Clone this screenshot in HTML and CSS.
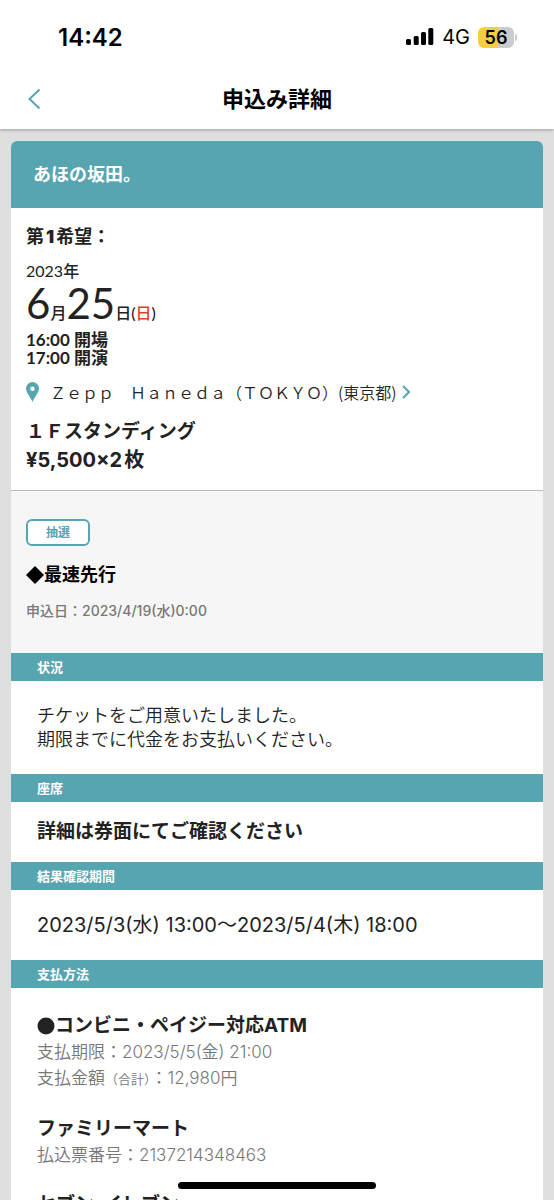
FILE: index.html
```html
<!DOCTYPE html>
<html lang="ja">
<head>
<meta charset="utf-8">
<meta name="viewport" content="width=device-width, initial-scale=1">
<title>申込み詳細</title>
<link rel="stylesheet" href="styles.css">
</head>
<body>
<div class="app">
  <header class="top">
    <div class="status">
      <time class="clock">14:42</time>
      <div class="status-right">
        <svg class="signal" width="28" height="18" viewBox="0 0 28 18" aria-hidden="true">
          <rect x="0" y="11" width="5" height="6" rx="1.5"/>
          <rect x="7.7" y="8" width="5" height="9" rx="1.5"/>
          <rect x="15" y="4" width="5" height="13" rx="1.5"/>
          <rect x="22.3" y="0" width="5" height="17" rx="1.5"/>
        </svg>
        <span class="network">4G</span>
        <span class="battery"><span class="battery-level">56</span><span class="battery-tip"></span></span>
      </div>
    </div>
    <div class="nav">
      <button class="back" type="button" aria-label="戻る">
        <svg width="13" height="22" viewBox="0 0 13 22" aria-hidden="true"><path d="M11.5 1.5 1.5 11l10 9.5"/></svg>
      </button>
      <h1 class="title">申込み詳細</h1>
    </div>
  </header>

  <main class="page">
    <article class="card">
      <h2 class="artist">あほの坂田。</h2>
      <section class="event">
        <h3 class="choice">第<b>1</b>希望：</h3>
        <div class="year">2023<span>年</span></div>
        <div class="date"><span class="big">6</span>月<span class="big">25</span>日(<span class="sunday">日</span>)</div>
        <div class="times">16:00 開場<br>17:00 開演</div>
        <a class="venue" href="#">
          <svg class="pin" width="13" height="20" viewBox="0 0 13 20" aria-hidden="true"><path fill-rule="evenodd" d="M6.5 0A6.5 6.5 0 0 0 0 6.5C0 10.5 4 14 6.5 20 9 14 13 10.5 13 6.5A6.5 6.5 0 0 0 6.5 0Zm0 4.500a2.200 2.200 0 1 1 0 4.400 2.200 2.200 0 0 1 0-4.400Z"/></svg>
          <span>Ｚｅｐｐ　Ｈａｎｅｄａ（ＴＯＫＹＯ）(東京都)</span>
          <svg class="chevron" width="8" height="14" viewBox="0 0 8 14" aria-hidden="true"><path d="m1 1 6 6-6 6"/></svg>
        </a>
        <div class="ticket">１Ｆスタンディング</div>
        <div class="ticket price">¥5,500×2<span>枚</span></div>
      </section>
      <section class="entry">
        <span class="tag">抽選</span>
        <h3 class="entry-name"><svg width="18" height="18" viewBox="0 0 18 18" aria-hidden="true"><path d="m9 0 9 9-9 9-9-9z"/></svg>最速先行</h3>
        <p class="entry-date">申込日：2023/4/19(水)0:00</p>
      </section>
      <section>
        <h3 class="bar">状況</h3>
        <p class="body state">チケットをご用意いたしました。<br>期限までに代金をお支払いください。</p>
      </section>
      <section>
        <h3 class="bar">座席</h3>
        <p class="body seat">詳細は券面にてご確認ください</p>
      </section>
      <section>
        <h3 class="bar">結果確認期間</h3>
        <p class="body period">2023/5/3(水) 13:00～2023/5/4(木) 18:00</p>
      </section>
      <section>
        <h3 class="bar">支払方法</h3>
        <div class="body payment">
          <div>
            <h4 class="method"><svg width="18" height="18" viewBox="0 0 18 18" aria-hidden="true"><circle cx="9" cy="9" r="8.500"/></svg>コンビニ・ペイジー対応ATM</h4>
            <p>支払期限：2023/5/5(金) 21:00</p>
            <p>支払金額<small>（合計）</small>：12,980円</p>
          </div>
          <div>
            <h4 class="method">ファミリーマート</h4>
            <p>払込票番号：2137214348463</p>
          </div>
          <div>
            <h4 class="method">セブン-イレブン</h4>
          </div>
        </div>
      </section>
    </article>
  </main>
  <div class="home-indicator"></div>
</div>
</body>
</html>
```

FILE: styles.css
```css
* { box-sizing: border-box; }

body, h1, h2, h3, h4, p { margin: 0; }

body {
  background: #dfdfdf;
  color: #222;
  font-family: Inter, "Noto Sans CJK JP", sans-serif;
  font-size: 16px;
}

.app {
  position: relative;
  display: flex;
  flex-direction: column;
  height: 100vh;
  overflow: hidden;
}

.top {
  flex: none;
  background: #fff;
  color: #000;
  box-shadow: 0 1px 3px rgba(0, 0, 0, 0.3);
  z-index: 1;
}

.status {
  display: flex;
  justify-content: space-between;
  align-items: center;
  height: 74px;
  padding: 0 40px 0 58px;
}

.clock { font-size: 24px; font-weight: 600; }
.status-right { display: flex; align-items: center; gap: 8px; }
.network { font-size: 20px; }

.battery {
  position: relative;
  width: 36px;
  height: 21px;
  border-radius: 6px;
  background: linear-gradient(90deg, #f6cd42 56%, #cbcbcd 56%);
  text-align: center;
}

.battery-level { display: block; font-size: 18px; font-weight: 600; line-height: 21px; }

.battery-tip {
  position: absolute;
  top: 7px;
  right: -3px;
  width: 2px;
  height: 7px;
  border-radius: 0 2px 2px 0;
  background: #cbcbcd;
}

.nav {
  display: grid;
  grid-template-columns: 40px 1fr 40px;
  align-items: center;
  height: 55px;
  padding: 0 14px 6px;
}

.back { display: flex; justify-content: center; padding: 0; border: 0; background: none; }
.back path, .chevron path { fill: none; stroke: #57a5b1; stroke-width: 2; }
.title { font-size: 22px; font-weight: 700; line-height: 30px; text-align: center; }

.page { flex: 1; min-height: 0; overflow-y: auto; scrollbar-width: none; padding: 12px 11px 0; }
.card { overflow: hidden; border-radius: 6px 6px 0 0; background: #fff; }

.artist {
  padding: 20px 22px;
  background: #57a5b1;
  color: #fff;
  font-size: 18px;
  font-weight: 700;
  line-height: 27px;
}

.event {
  padding: 16px 15px 15px;
  border-bottom: 1px solid #bbb;
}

.choice { font-size: 18px; font-weight: 700; line-height: 26px; }
.choice b { margin: 0 2px; }

.year, .date, .times { font-family: Lato, "Noto Sans CJK JP", sans-serif; }
.year { margin-top: 11px; line-height: 20px; }
.year span { font-weight: 500; }
.date {
  display: flex;
  align-items: baseline;
  margin: 4px 0 10px;
  font-weight: 500;
  line-height: 16px;
}
.big { font-size: 42px; font-weight: 400; line-height: 36px; }
.sunday { color: #e4392d; }
.times { font-size: 17px; font-weight: 700; line-height: 18px; }

.venue {
  display: flex;
  align-items: center;
  gap: 11px;
  margin-top: 12px;
  color: #222;
  font-family: "Noto Sans CJK JP", sans-serif;
  font-weight: 350;
  line-height: 26px;
  text-decoration: none;
}
.venue svg { flex: none; }
.pin { fill: #57a5b1; }
.chevron { margin-left: -6px; }

.ticket { font-size: 19px; font-weight: 700; line-height: 29px; }
.venue + .ticket { margin-top: 12px; }
.price { font-size: 20px; }
.price span { margin-left: 2px; }

.entry { padding: 28px 15px 31px; background: #f6f6f6; color: #000; }

.tag {
  display: block;
  width: 64px;
  border: 2px solid #57a5b1;
  border-radius: 6px;
  background: #fff;
  color: #57a5b1;
  font-size: 12px;
  font-weight: 700;
  line-height: 23px;
  text-align: center;
}

.entry-name, .method { display: flex; align-items: center; }
.entry-name { margin-top: 16px; font-size: 18px; font-weight: 700; line-height: 26px; }
.entry-date { margin-top: 12px; color: #777; font-size: 14px; font-weight: 500; line-height: 22px; }

.bar {
  padding: 0 26px;
  background: #57a5b1;
  color: #fff;
  font-size: 13px;
  font-weight: 700;
  line-height: 28px;
}

.body { padding: 0 26px; }
.state { padding-top: 23px; padding-bottom: 22px; font-size: 18px; font-weight: 350; line-height: 24px; }
.seat { font-size: 19px; font-weight: 700; line-height: 60px; }
.period { font-size: 20px; line-height: 70px; }

.payment {
  display: flex;
  flex-direction: column;
  gap: 24px;
  padding-top: 25px;
  color: #777;
  font-size: 17px;
  font-weight: 350;
  line-height: 26px;
}
.method { color: #222; font-size: 19px; font-weight: 700; line-height: 26px; }
.method svg { fill: #222; }
.payment small { font-size: 13px; }

.home-indicator {
  position: absolute;
  bottom: 11px;
  left: 50%;
  z-index: 2;
  width: 198px;
  height: 7px;
  margin-left: -99px;
  border-radius: 4px;
  background: #000;
}
```
